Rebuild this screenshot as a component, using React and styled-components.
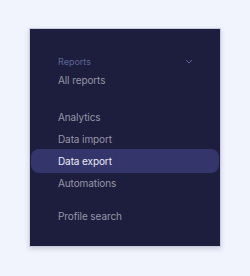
import React from "react";
import styled, { createGlobalStyle } from "styled-components";

const Global = createGlobalStyle`
  html, body { margin: 0; padding: 0; background: #f1f4fd; }
  body { font-family: Inter, "Noto Sans", sans-serif; }
`;

const Page = styled.div`
  padding: 28px 29px;
`;

const Panel = styled.nav`
  width: 192px;
  height: 219px;
  box-sizing: border-box;
  background: #1d1d3d;
  border: 1px solid #c9cbd8;
  box-shadow: 0 2px 5px rgba(40, 44, 80, 0.18);
  padding: 25px 1px 0;
  display: flex;
  flex-direction: column;
`;

const Header = styled.div`
  display: flex;
  align-items: center;
  justify-content: space-between;
  height: 14px;
  padding: 0 26px 0 27px;
  font-size: 9px;
  color: #5d6699;
`;

const Group = styled.div`
  display: flex;
  flex-direction: column;
  margin-top: ${(p) => p.$gap || 0}px;
`;

const Item = styled.div`
  display: flex;
  align-items: center;
  height: ${(p) => (p.$active ? 24 : 22)}px;
  margin: ${(p) => (p.$active ? "-1px 0" : "0")};
  padding: 0 27px;
  border-radius: 8px;
  font-size: 10px;
  letter-spacing: -0.1px;
  color: ${(p) => (p.$active ? "#ececf4" : "#9797a6")};
  background: ${(p) => (p.$active ? "#33356b" : "transparent")};
`;

const Chevron = () => (
  <svg width="8" height="5" viewBox="0 0 8 5" fill="none">
    <path d="M1 1l3 3 3-3" stroke="#5d6699" strokeWidth="1" />
  </svg>
);

export default function App() {
  return (
    <>
      <Global />
      <Page>
        <Panel>
          <Header>
            <span>Reports</span>
            <Chevron />
          </Header>
          <Group $gap={1}>
            <Item>All reports</Item>
          </Group>
          <Group $gap={15}>
            <Item>Analytics</Item>
            <Item>Data import</Item>
            <Item $active>Data export</Item>
            <Item>Automations</Item>
          </Group>
          <Group $gap={11}>
            <Item>Profile search</Item>
          </Group>
        </Panel>
      </Page>
    </>
  );
}
